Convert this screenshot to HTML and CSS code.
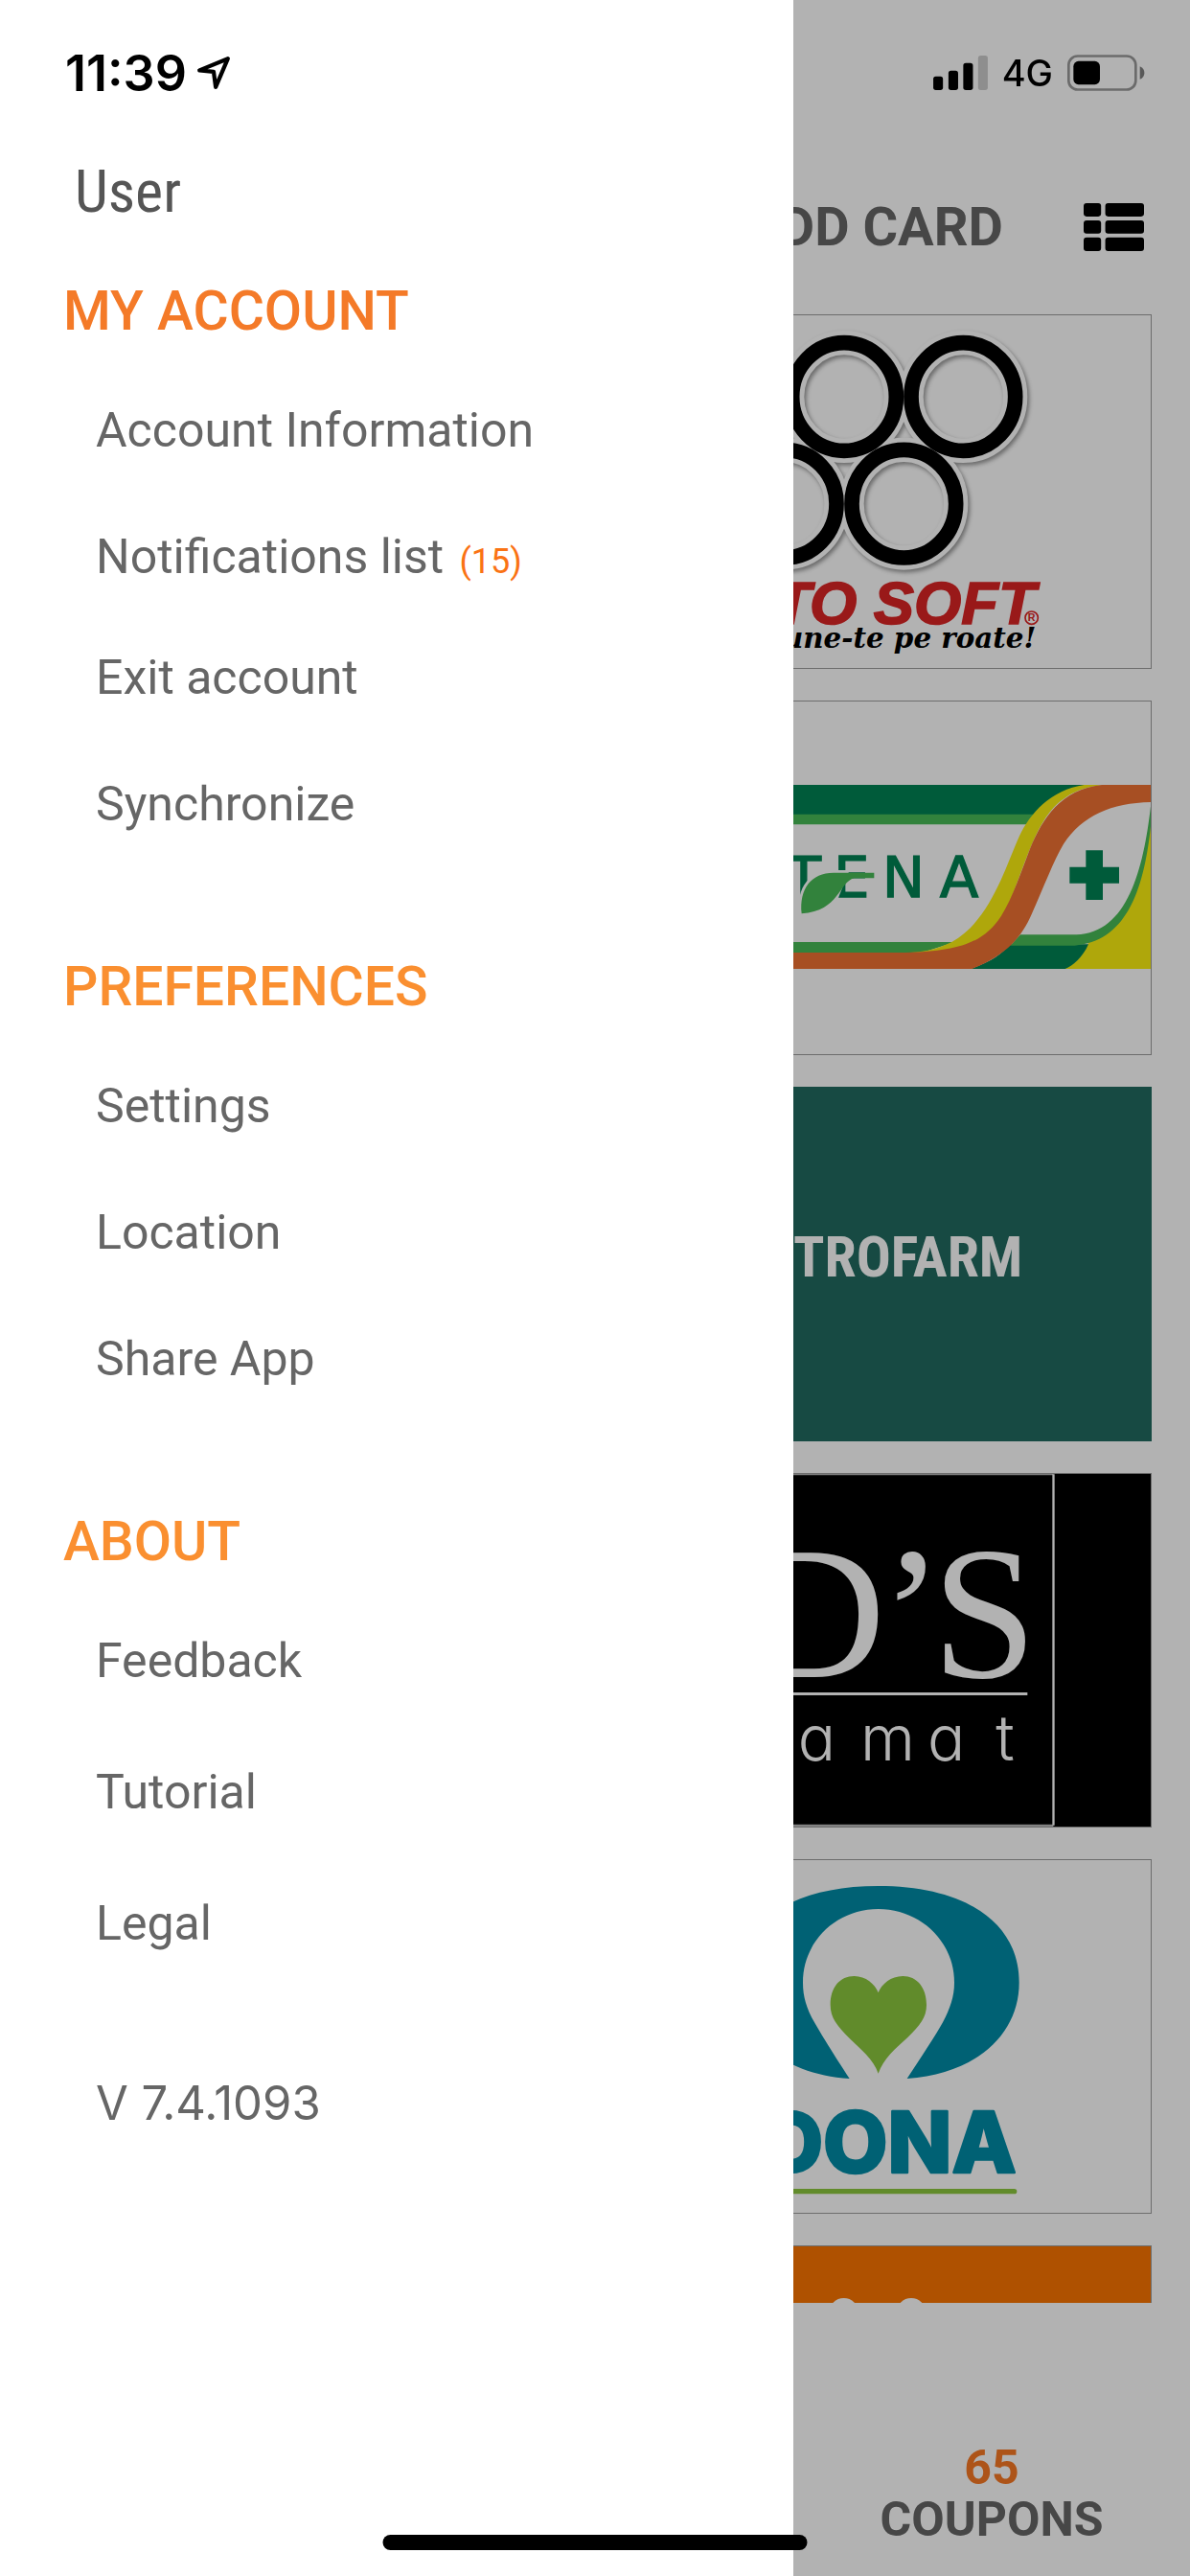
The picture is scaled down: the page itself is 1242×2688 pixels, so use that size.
FILE: index.html
```html
<!DOCTYPE html>
<html lang="en">
<head>
<meta charset="utf-8">
<meta name="viewport" content="width=device-width, initial-scale=1">
<title>Cards</title>
<link rel="stylesheet" href="styles.css">
</head>
<body>
<div class="app">
  <header class="toolbar">
    <button class="add-card" type="button">ADD CARD</button>
    <button class="view-toggle" type="button" aria-label="List view">
      <svg viewBox="934 638 187 148" aria-hidden="true">
        <rect x="934" y="638" width="54" height="41" rx="9"/><rect x="1001" y="638" width="120" height="41" rx="9"/>
        <rect x="934" y="691" width="54" height="41" rx="9"/><rect x="1001" y="691" width="120" height="41" rx="9"/>
        <rect x="934" y="744" width="54" height="42" rx="9"/><rect x="1001" y="744" width="120" height="42" rx="9"/>
      </svg>
    </button>
  </header>

  <main class="cards">
    <a class="card" href="#auto-soft">
      <svg viewBox="-546 28 1689 1104">
        <g class="ring-halo">
          <ellipse cx="183" cy="283" rx="163" ry="169"/><ellipse cx="556" cy="283" rx="163" ry="169"/>
          <ellipse cx="-4" cy="618" rx="163" ry="169"/><ellipse cx="370" cy="618" rx="163" ry="169"/>
        </g>
        <g class="ring">
          <ellipse cx="183" cy="283" rx="163" ry="169"/><ellipse cx="556" cy="283" rx="163" ry="169"/>
          <ellipse cx="-4" cy="618" rx="163" ry="169"/><ellipse cx="370" cy="618" rx="163" ry="169"/>
        </g>
        <text class="soft-name" x="782" y="995">AUTO SOFT</text>
        <circle class="soft-mark" cx="770" cy="975" r="20"/>
        <text class="soft-r" x="770" y="986">R</text>
        <text class="soft-line" x="784" y="1070">Pune-te pe roate!</text>
      </svg>
    </a>

    <a class="card" href="#catena">
      <svg viewBox="-546 34 1689 1104">
        <path fill="#008353" d="M-549 295H950C870 310 810 350 775 390H-549Z"/>
        <path fill="#48ba56" d="M-549 387H785L755 419H-549ZM-549 787H530L420 822H-549Z"/>
        <path fill="#fbf011" d="M1000 295H935C830 310 765 385 732 455C685 560 640 720 520 787C470 812 420 820 375 821L480 825C600 810 650 760 685 700C740 580 770 440 840 365C890 315 940 300 1000 295Z"/>
        <path fill="#fbf011" d="M1143 390V871H872C915 850 930 830 950 785C1060 760 1110 600 1143 390Z"/>
        <path fill="#008353" d="M700 794H948C930 835 900 862 875 871H580C640 850 680 825 700 794Z"/>
        <path fill="#48ba56" d="M1143 362C1120 560 1070 760 910 764H735L703 798H905C1060 785 1120 640 1143 425Z"/>
        <path fill="#f07133" d="M1143 295H990C860 310 805 400 765 495C740 560 710 650 675 705C620 790 540 816 375 820H-549V871H583C690 830 740 770 770 700C810 610 840 530 870 480C930 390 1020 352 1143 349Z"/>
        <path fill="#008353" d="M940 500H993V552H1044V603H993V655H940V603H889V552H940Z"/>
        <text class="catena-name" x="-250 -118 2 150 302 482" y="645">CATENA</text>
        <path fill="#fff" d="M42 706C30 610 80 562 150 562H200L160 660Z"/>
        <path fill="#48ba56" d="M50 698C42 620 80 570 150 570H277V587H215C165 600 170 690 50 698Z"/>
      </svg>
    </a>

    <a class="card card-green" href="#centrofarm">
      <svg viewBox="-546 46 1689 1104">
        <text class="centro-name" x="742" y="636">CENTROFARM</text>
      </svg>
    </a>

    <a class="card card-black" href="#ds-amat">
      <svg viewBox="-546 55 1689 1104">
        <path fill="#bbb" d="M-549 54H838V59H-549ZM-549 1152H838V1159H-549Z"/>
        <path fill="#fff" d="M835 56H842V1155H835Z"/>
        <text class="ds-name" x="-114 298 458" y="690">D’S</text>
        <path fill="#fff" d="M-300 739H757V748H-300Z"/>
        <text class="ds-line" x="38 234 444 658" y="952">amat</text>
      </svg>
    </a>

    <a class="card" href="#dona">
      <svg viewBox="-546 67 1689 1104">
        <path fill="#008ca7" d="M380 751C600 735 731 610 731 450C731 260 560 148 290 148C20 148-151 260-151 450C-151 610-20 735 200 751C150 675 110 610 90 575C65 530 54 495 54 450C54 320 160 220 290 220C420 220 528 320 528 450C528 495 515 530 492 575C470 615 430 675 380 751Z"/>
        <path fill="#8cc73e" d="M290 735C275 690 235 660 200 625C160 585 140 560 140 520C140 465 170 430 215 430C250 430 280 455 290 482C300 455 330 430 367 430C410 430 441 465 441 520C441 560 420 585 382 622C345 655 305 690 290 735Z"/>
        <text class="dona-name" x="722" y="1044">DONA</text>
        <path fill="none" stroke="#8cc73e" stroke-width="16" stroke-linecap="round" d="M-140 1104H716"/>
      </svg>
    </a>

    <a class="card card-orange" href="#orange">
      <svg viewBox="-546 75 1689 1104">
        <circle cx="182" cy="283" r="46" fill="#fff"/><circle cx="393" cy="283" r="46" fill="#fff"/>
      </svg>
    </a>
  </main>

  <footer class="tabs">
    <a class="tab" href="#coupons"><span class="tab-count">65</span>COUPONS</a>
  </footer>
</div>

<div class="scrim"></div>

<nav class="drawer" aria-label="Menu">
  <p class="user">User</p>

  <h2 class="heading heading-active">MY ACCOUNT</h2>
  <ul class="menu">
    <li><a href="#info">Account Information</a></li>
    <li class="notifications"><a href="#notifications">Notifications list <span class="count">(15)</span></a></li>
    <li><a href="#exit">Exit account</a></li>
    <li><a href="#sync">Synchronize</a></li>
  </ul>

  <h2 class="heading">PREFERENCES</h2>
  <ul class="menu">
    <li><a href="#settings">Settings</a></li>
    <li><a href="#location">Location</a></li>
    <li><a href="#share">Share App</a></li>
  </ul>

  <h2 class="heading">ABOUT</h2>
  <ul class="menu menu-loose">
    <li><a href="#feedback">Feedback</a></li>
    <li><a href="#tutorial">Tutorial</a></li>
    <li><a href="#legal">Legal</a></li>
  </ul>

  <p class="version">V 7.4.1093</p>
</nav>

<div class="status">
  <span class="time">11:39</span>
  <svg class="locate" viewBox="0 0 34 34" aria-hidden="true"><path d="M31 3L3 14.500L17 16L19 31Z"/></svg>
  <svg class="signal" viewBox="461 175 169 107" aria-hidden="true">
    <rect x="461" y="240" width="30" height="42" rx="8"/><rect x="508" y="222" width="30" height="60" rx="8"/>
    <rect x="554" y="198" width="30" height="84" rx="8"/><rect x="600" y="175" width="30" height="107" rx="8" opacity=".2"/>
  </svg>
  <span class="network">4G</span>
  <svg class="battery" viewBox="883 172 243 113" aria-hidden="true">
    <rect x="887" y="176" width="210" height="105" rx="28" fill="none" stroke="#000" stroke-width="8" opacity=".4"/>
    <rect x="902" y="192" width="83" height="73" rx="16"/>
    <path d="M1110 208C1129 215 1129 242 1110 249Z" opacity=".5"/>
  </svg>
</div>
<div class="home-bar"></div>
</body>
</html>
```
FILE: styles.css
```css
* {
  box-sizing: border-box;
}

body {
  margin: 0;
  background: #fff;
  font-family: Roboto, "Liberation Sans", sans-serif;
  color: #666;
}

a {
  color: inherit;
  text-decoration: none;
}

button {
  padding: 0;
  border: 0;
  background: none;
  font: inherit;
  color: inherit;
}

svg {
  display: block;
}

/* Card list behind the menu */
.app {
  display: flex;
  flex-direction: column;
  height: 100vh;
  overflow: hidden;
}

.toolbar {
  display: flex;
  flex: none;
  align-items: center;
  justify-content: flex-end;
  gap: 84px;
  height: 182px;
  margin-top: 146px;
  padding: 0 48px 0 40px;
}

.add-card {
  font-size: 56px;
  font-weight: 700;
  line-height: 64px;
}

.view-toggle svg {
  width: 63px;
  height: 50px;
}

.cards {
  display: grid;
  flex: 1;
  grid-template-columns: 1fr 1fr;
  grid-auto-rows: max-content;
  gap: 33px 32px;
  min-height: 0;
  padding: 0 40px;
  overflow: hidden;
}

.card {
  grid-column: 2;
  aspect-ratio: 565 / 370;
  overflow: hidden;
  border: 1px solid #9c9c9c;
  background: #fff;
}

.card svg {
  width: 100%;
  height: 100%;
}

.card-green {
  border-color: #226a60;
  background: #226a60;
}

.card-black {
  background: #000;
}

.card-orange {
  background: #fb7500;
}

.tabs {
  display: grid;
  flex: none;
  grid-template-columns: repeat(3, 1fr);
  height: 285px;
  padding-top: 145px;
}

.tab {
  display: flex;
  grid-column: 3;
  flex-direction: column;
  align-items: center;
  font-size: 50px;
  font-weight: 700;
  line-height: 54px;
}

.tab-count {
  color: #f87924;
}

/* Card logos */
.ring ellipse {
  fill: none;
  stroke: #000;
  stroke-width: 47;
}

.ring-halo {
  filter: drop-shadow(6px 8px 6px #999);
}

.ring-halo ellipse {
  fill: none;
  stroke: #fff;
  stroke-width: 76;
}

.soft-name {
  fill: #dc2525;
  stroke: #dc2525;
  stroke-width: 5;
  font: italic 700 190px "Liberation Sans", sans-serif;
  text-anchor: end;
}

.soft-mark {
  fill: #fff;
  stroke: #dc2525;
  stroke-width: 5;
}

.soft-r {
  fill: #dc2525;
  font: 700 32px "Liberation Sans", sans-serif;
  text-anchor: middle;
}

.soft-line {
  fill: #000;
  font: italic 700 88px "DejaVu Serif", serif;
  text-anchor: end;
}

.catena-name {
  fill: #008353;
  stroke: #008353;
  stroke-width: 4;
  font: 400 178px "DejaVu Sans", sans-serif;
}

.centro-name {
  fill: #fff;
  font: 700 180px "Liberation Sans Narrow", "Roboto Condensed", Roboto, sans-serif;
  text-anchor: end;
}

.ds-name {
  fill: #fff;
  font: 400 590px "Liberation Serif", serif;
}

.ds-line {
  fill: #fff;
  font: 300 196px Inter, sans-serif;
  font-feature-settings: "cv11";
}

.dona-name {
  fill: #008ca7;
  stroke: #008ca7;
  stroke-width: 8;
  stroke-linejoin: round;
  font: 800 262px Inter, sans-serif;
  text-anchor: end;
}

/* Side menu */
.scrim {
  position: fixed;
  inset: 0;
  background: rgba(0, 0, 0, .3);
}

.drawer {
  position: fixed;
  inset: 0 auto 0 0;
  width: 66.667%;
  padding: 160px 66px 0;
  background: #fff;
}

.user {
  margin: 0 0 55px;
  padding-left: 12px;
  color: #555;
  font-family: "Roboto Condensed", Roboto, sans-serif;
  font-size: 62px;
  line-height: 80px;
}

.heading {
  margin: 0 0 64px;
  color: #fa8f30;
  font-size: 57px;
  font-weight: 500;
  line-height: 60px;
}

.heading-active {
  color: #f47a28;
}

.menu {
  display: flex;
  flex-direction: column;
  gap: 72px;
  margin: 0 0 131px;
  padding: 0 0 0 34px;
  font-size: 50px;
  line-height: 60px;
  list-style: none;
}

.notifications {
  height: 54px;
}

.count {
  margin-left: 4px;
  color: #fa7314;
  font-size: 36px;
}

.menu-loose {
  gap: 77px;
  margin-bottom: 128px;
}

.version {
  margin: 0;
  padding-left: 34px;
  font-family: Inter, sans-serif;
  font-size: 49px;
  line-height: 60px;
}

/* Device chrome */
.status {
  position: fixed;
  inset: 0 0 auto;
  display: flex;
  align-items: center;
  height: 152px;
  padding: 0 47px 0 68px;
  color: #000;
  font-family: Inter, sans-serif;
}

.time {
  font-size: 52px;
  font-weight: 600;
}

.locate {
  width: 36px;
  height: 36px;
  margin-left: 10px;
  fill: none;
  stroke: #000;
  stroke-width: 4;
  stroke-linejoin: round;
}

.signal {
  width: 57px;
  height: 36px;
  margin-left: auto;
}

.network {
  margin: 0 15px;
  font-size: 38px;
  font-weight: 500;
}

.battery {
  width: 81px;
  height: 38px;
}

.home-bar {
  position: fixed;
  bottom: 27px;
  left: 50%;
  width: 443px;
  height: 16px;
  border-radius: 8px;
  background: #000;
  translate: -50% 0;
}
```
